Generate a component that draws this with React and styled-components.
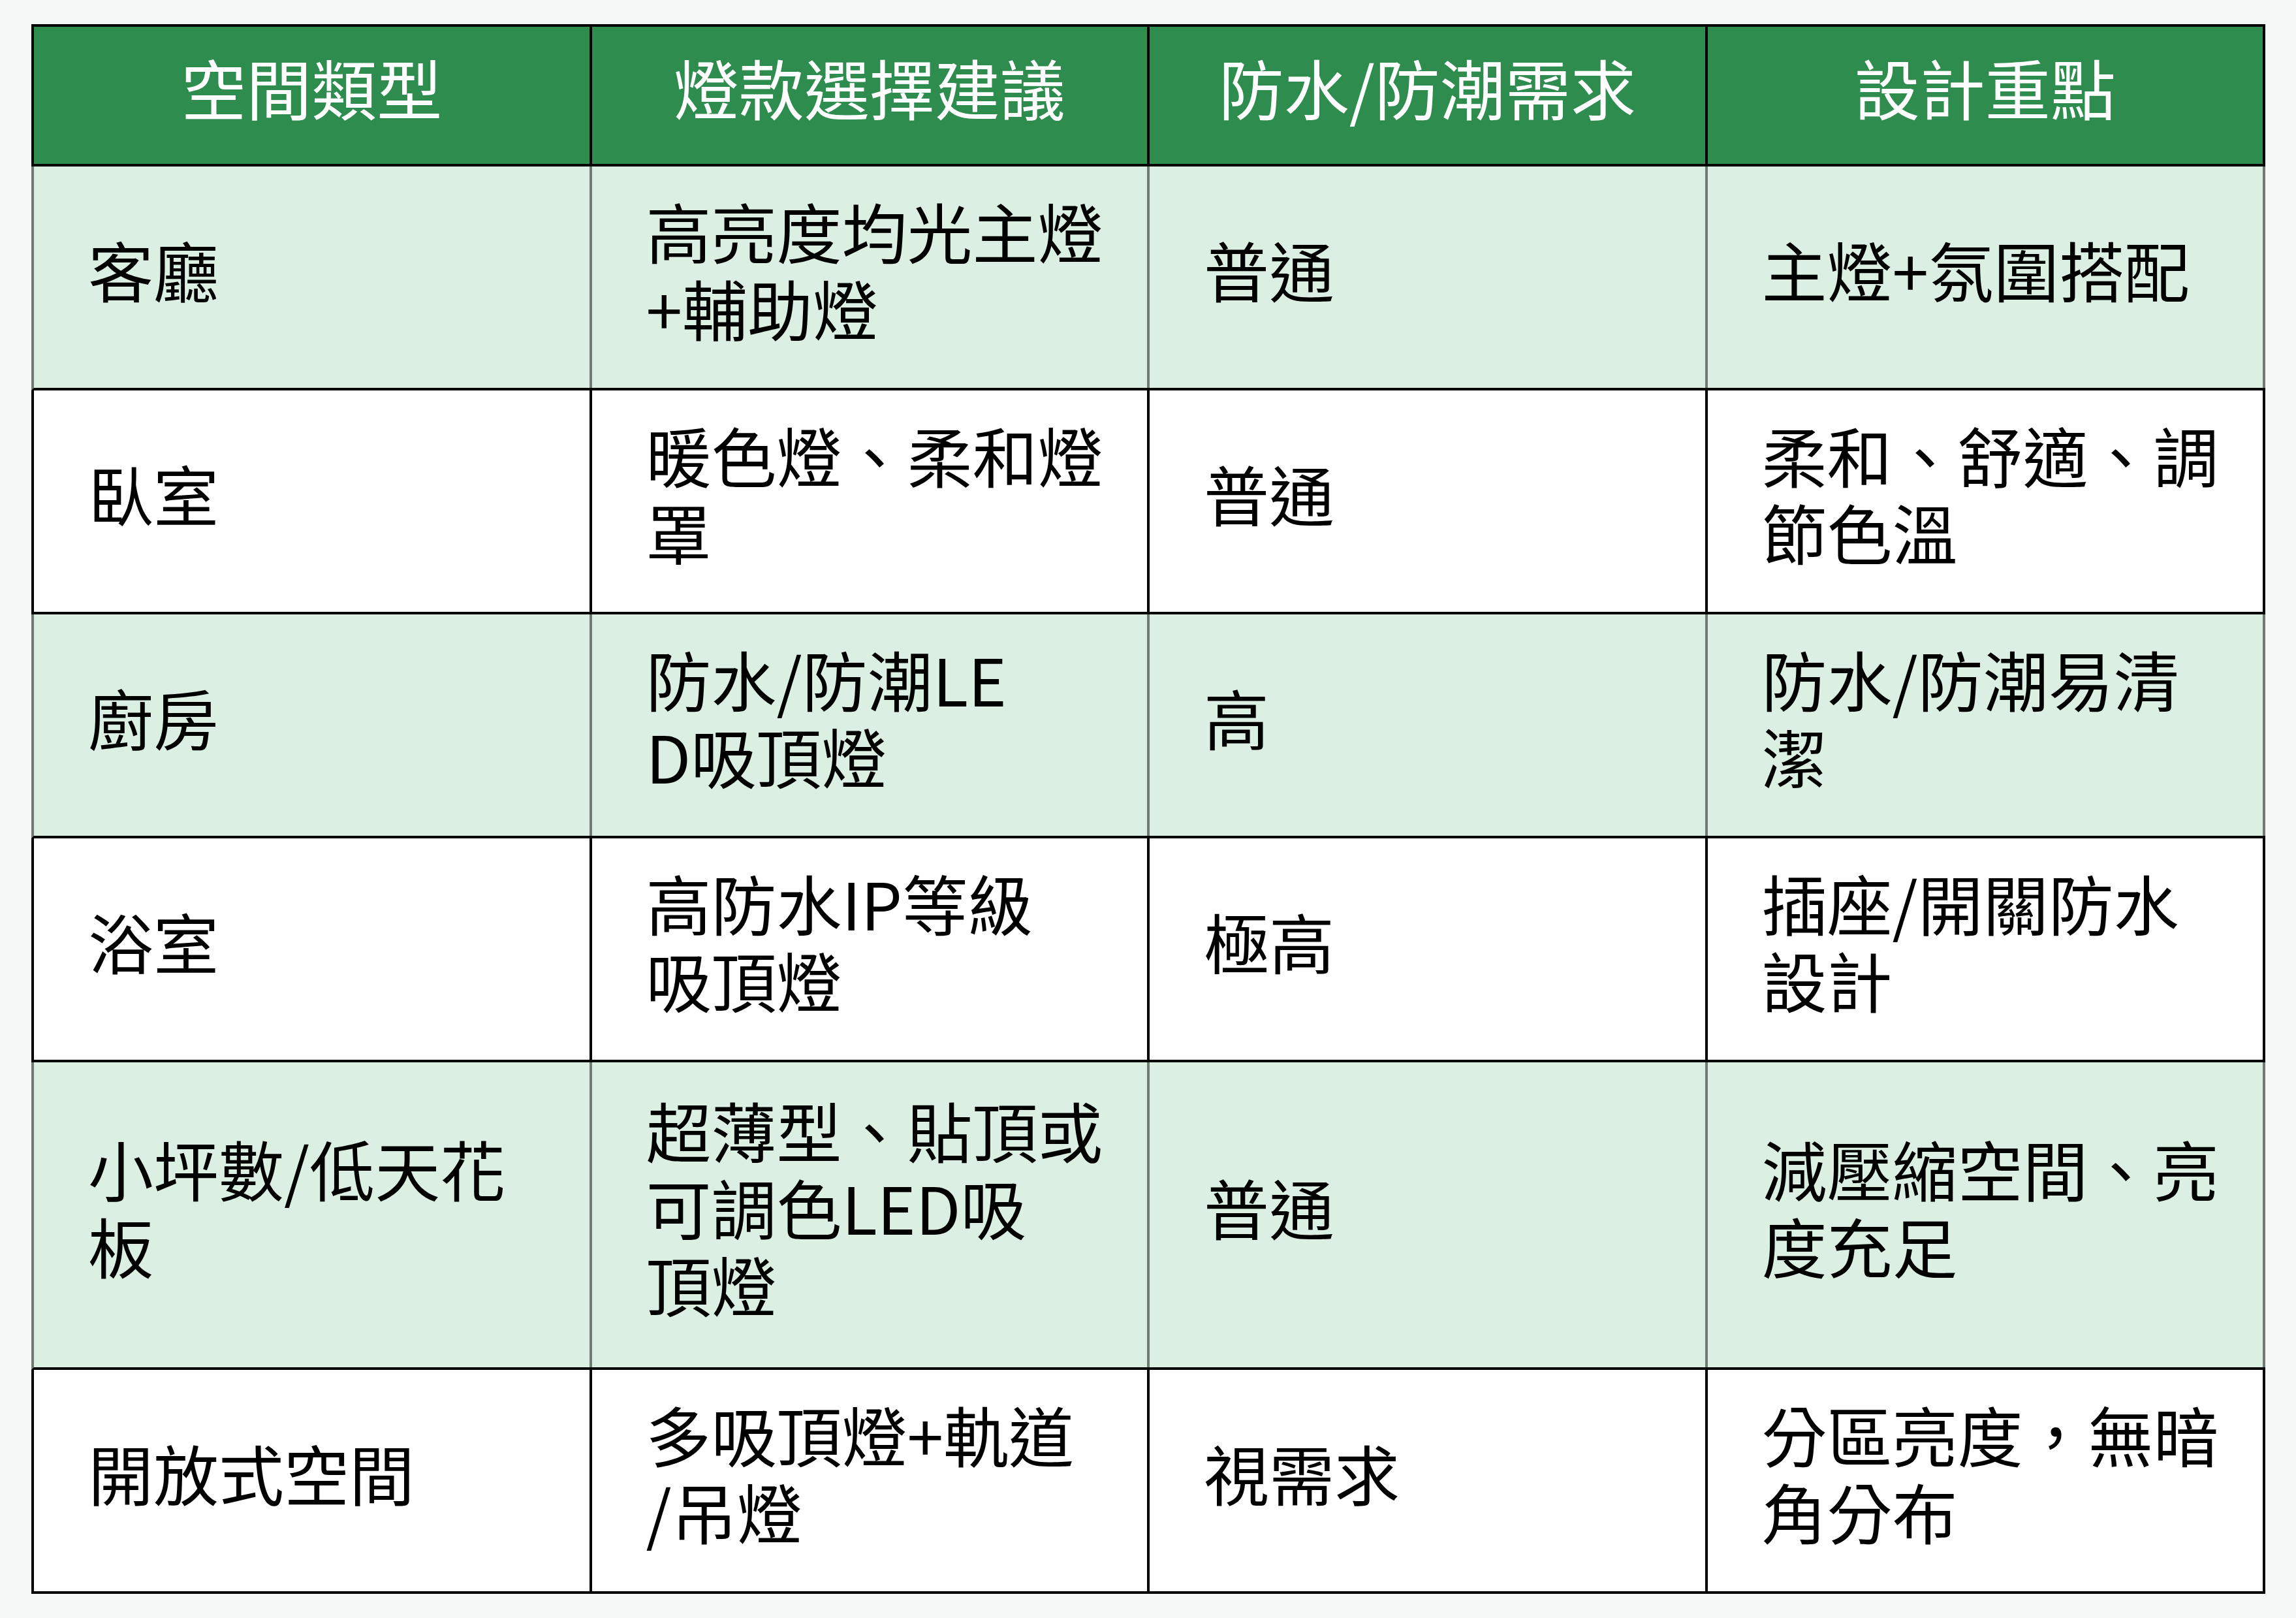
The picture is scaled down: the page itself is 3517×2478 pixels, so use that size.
import React from 'react';
import styled, { createGlobalStyle } from 'styled-components';

const GlobalStyle = createGlobalStyle`
  html, body {
    margin: 0;
    padding: 0;
    background: #f4f8f6;
  }
  body {
    min-height: 100vh;
    font-family: "Noto Sans CJK TC", "Noto Sans", sans-serif;
  }
`;

const Page = styled.div`
  padding: 37px 0 0 48px;
`;

const Table = styled.div`
  display: flex;
  flex-direction: column;
  width: 3422px;
  border-top: 4px solid #000;
`;

const Row = styled.div`
  display: grid;
  grid-template-columns: repeat(4, 1fr);
  height: ${(p) => p.$height}px;
  box-sizing: content-box;
  background: ${(p) => p.$bg};
  border-left: 4px solid ${(p) => p.$line};
  border-bottom: 4px solid #000;
`;

const Cell = styled.div`
  display: flex;
  flex-direction: column;
  justify-content: center;
  align-items: ${(p) => (p.$head ? 'center' : 'flex-start')};
  padding: ${(p) => (p.$head ? '0 0 26px 0' : '0 0 26px 83px')};
  border-right: 4px solid ${(p) => p.$line};
  font-size: 100px;
  line-height: 118px;
  font-weight: 400;
  color: ${(p) => (p.$head ? '#ffffff' : '#000000')};
  white-space: nowrap;
`;

const Line = styled.span`
  display: block;
`;

const headers = ['空間類型', '燈款選擇建議', '防水/防潮需求', '設計重點'];

const rows = [
  [['客廳'], ['高亮度均光主燈', '+輔助燈'], ['普通'], ['主燈+氛圍搭配']],
  [['臥室'], ['暖色燈、柔和燈', '罩'], ['普通'], ['柔和、舒適、調', '節色溫']],
  [['廚房'], ['防水/防潮LE', 'D吸頂燈'], ['高'], ['防水/防潮易清', '潔']],
  [['浴室'], ['高防水IP等級', '吸頂燈'], ['極高'], ['插座/開關防水', '設計']],
  [['小坪數/低天花', '板'], ['超薄型、貼頂或', '可調色LED吸', '頂燈'], ['普通'], ['減壓縮空間、亮', '度充足']],
  [['開放式空間'], ['多吸頂燈+軌道', '/吊燈'], ['視需求'], ['分區亮度，無暗', '角分布']],
];

const heights = [339, 339, 339, 339, 467, 339];

export default function App() {
  return (
    <Page>
      <GlobalStyle />
      <Table>
        <Row $height={210} $bg="#2e8c4f" $line="#000">
          {headers.map((h) => (
            <Cell key={h} $head $line="#000">
              {h}
            </Cell>
          ))}
        </Row>
        {rows.map((row, i) => {
          const tinted = i % 2 === 0;
          const line = tinted ? '#707b75' : '#000';
          return (
            <Row key={i} $height={heights[i]} $bg={tinted ? '#dbefe3' : '#ffffff'} $line={line}>
              {row.map((cell, j) => (
                <Cell key={j} $line={line}>
                  {cell.map((t) => (
                    <Line key={t}>{t}</Line>
                  ))}
                </Cell>
              ))}
            </Row>
          );
        })}
      </Table>
    </Page>
  );
}
